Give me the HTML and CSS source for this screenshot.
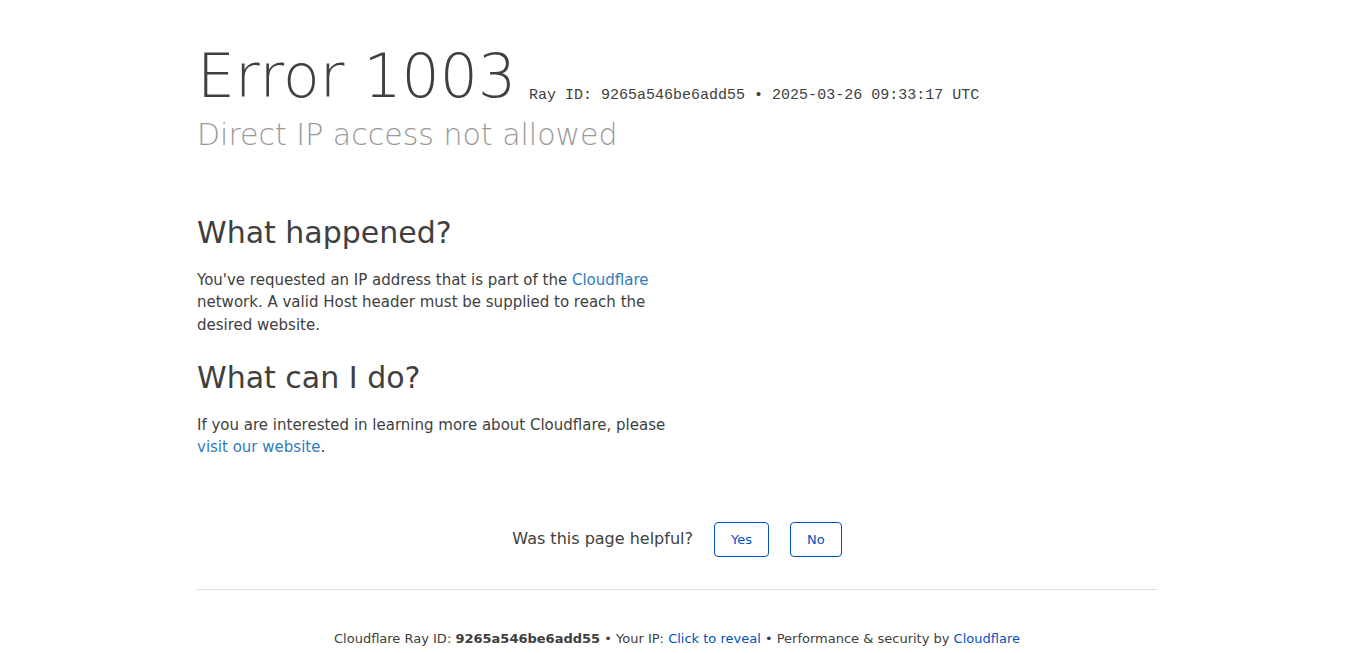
FILE: index.html
```html
<!DOCTYPE html>
<html lang="en">
<head>
<meta charset="utf-8">
<title>Direct IP access not allowed | Cloudflare</title>
<link rel="stylesheet" href="styles.css">
</head>
<body>
<div class="wrapper">
  <header class="header">
    <h1 class="title"><span class="code">Error 1003</span><small class="ray-id">Ray ID: 9265a546be6add55 &bull; 2025-03-26 09:33:17 UTC</small></h1>
    <h2 class="subheadline">Direct IP access not allowed</h2>
  </header>

  <section class="content">
    <div class="column">
      <h2 class="section-title">What happened?</h2>
      <p class="text">You've requested an IP address that is part of the <a class="link" href="#">Cloudflare</a> network. A valid Host header must be supplied to reach the desired website.</p>
      <h2 class="section-title">What can I do?</h2>
      <p class="text">If you are interested in learning more about Cloudflare, please <a class="link" href="#">visit our website</a>.</p>
    </div>
  </section>

  <div class="feedback">
    <span class="feedback-question">Was this page helpful?</span>
    <button class="feedback-button" type="button">Yes</button>
    <button class="feedback-button" type="button">No</button>
  </div>

  <footer class="footer">
    <p class="footer-text">Cloudflare Ray ID: <strong class="footer-id">9265a546be6add55</strong> &bull; Your IP: <a class="footer-link" href="#">Click to reveal</a> &bull; Performance &amp; security by <a class="footer-link" href="#">Cloudflare</a></p>
  </footer>
</div>
</body>
</html>
```

FILE: styles.css
```css
html, body {
  margin: 0;
  padding: 0;
  background: #ffffff;
}

body {
  font-family: "DejaVu Sans", sans-serif;
  color: #404040;
  font-size: 15px;
  line-height: 1.5;
}

.wrapper {
  width: 960px;
  margin-left: calc(50% - 486px);
}

.header {
  padding-top: 40px;
}

.title {
  margin: 0;
  font-size: 60px;
  line-height: 72px;
  font-weight: 300;
  color: #404040;
  white-space: nowrap;
}

.ray-id {
  margin-left: 13px;
  font-family: "Liberation Mono", monospace;
  font-size: 15px;
  line-height: 1;
  font-weight: 400;
  vertical-align: -2px;
  color: #404040;
}

.subheadline {
  margin: 3px 0 0;
  font-size: 30px;
  line-height: 39px;
  font-weight: 300;
  color: #999999;
}

.content {
  padding-top: 59px;
}

.column {
  width: 480px;
}

.section-title {
  margin: 0;
  font-size: 30px;
  line-height: 39px;
  font-weight: 400;
  color: #404040;
}

.text {
  margin: 16.5px 0 22px;
  font-size: 15px;
  line-height: 22.5px;
}

.text:last-child {
  margin-bottom: 0;
}

.link {
  color: #2f7bbf;
  text-decoration: none;
}

.feedback {
  margin-top: 63px;
  display: flex;
  justify-content: center;
  align-items: center;
  gap: 21px;
}

.feedback-question {
  font-size: 16px;
  line-height: 24px;
  color: #404040;
}

.feedback-button {
  font-family: "DejaVu Sans", sans-serif;
  font-size: 13px;
  line-height: 33px;
  height: 35px;
  padding: 0 16px;
  border: 1px solid #0051c3;
  border-radius: 4px;
  background: #ffffff;
  color: #0051c3;
  cursor: pointer;
}

.footer {
  margin-top: 32px;
  border-top: 1px solid #dedede;
  padding-top: 39px;
}

.footer-text {
  margin: 0;
  text-align: center;
  font-size: 13px;
  line-height: 19.5px;
  color: #404040;
}

.footer-id {
  font-weight: 600;
}

.footer-link {
  color: #0051c3;
  text-decoration: none;
}
```
